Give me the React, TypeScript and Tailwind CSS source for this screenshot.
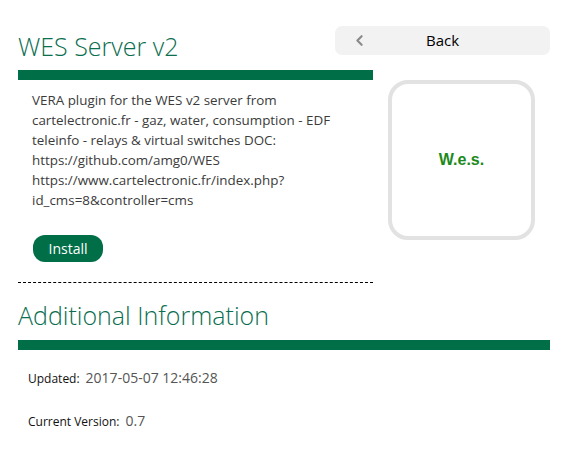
import { ChevronLeft } from "lucide-react";

const font = { fontFamily: '"Open Sans", "Liberation Sans", sans-serif' };

function BackButton() {
    return (
        <button className="relative flex h-[29px] w-[215px] items-center justify-center rounded-[7px] bg-[#f2f2f2] text-[15px] text-black">
            <ChevronLeft className="absolute left-[16px] top-[6px] h-[17px] w-[17px] text-[#8a8a8a]" strokeWidth={3} />
            <span>Back</span>
        </button>
    );
}

export default function App() {
    return (
        <div className="w-[567px] h-[460px] bg-white pl-[18px] pr-[17px] pt-[26px]" style={font}>
            {/* header */}
            <div className="flex justify-between items-start">
                <h1 className="pt-[4px] text-[25px] leading-[32px] font-light text-[#0b6e4f]">WES Server v2</h1>
                <BackButton />
            </div>

            <div className="mt-[8px] flex items-start">
                <div className="w-[355px]">
                    <div className="h-[10px] bg-[#006e46]" />
                    <p className="pl-[14px] pt-[10px] text-[13.4px] leading-[20px] text-[#3b3b3b]">
                        VERA plugin for the WES v2 server from<br />
                        cartelectronic.fr - gaz, water, consumption - EDF<br />
                        teleinfo - relays &amp; virtual switches DOC:<br />
                        https://github.com/amg0/WES<br />
                        https://www.cartelectronic.fr/index.php?<br />
                        id_cms=8&amp;controller=cms
                    </p>
                    <button className="ml-[15px] mt-[25px] h-[27px] w-[70px] rounded-[12px] bg-[#006e46] text-[14px] text-white">
                        Install
                    </button>
                    <div className="mt-[20px] border-t border-dashed border-black" />
                </div>
                <div className="ml-[15px] mt-[10px] flex h-[160px] w-[147px] items-center justify-center rounded-[20px] border-4 border-[#e2e2e2]">
                    <span className="text-[16px] font-bold text-[#1b8a1b]" style={{ fontFamily: '"Liberation Sans", Arial, sans-serif' }}>
                        W.e.s.
                    </span>
                </div>
            </div>

            <h2 className="mt-[14px] text-[25px] leading-[36px] font-light text-[#0b6e4f]">Additional Information</h2>
            <div className="mt-[7px] h-[10px] bg-[#006e46]" />

            <div className="pl-[10px] pt-[17px]">
                <div className="flex items-baseline gap-[6px] h-[22px]">
                    <span className="text-[12px] text-[#111]">Updated:</span>
                    <span className="text-[14px] text-[#555]">2017-05-07 12:46:28</span>
                </div>
                <div className="mt-[21px] flex items-baseline gap-[6px] h-[22px]">
                    <span className="text-[12px] text-[#111]">Current Version:</span>
                    <span className="text-[14px] text-[#555]">0.7</span>
                </div>
            </div>
        </div>
    );
}
